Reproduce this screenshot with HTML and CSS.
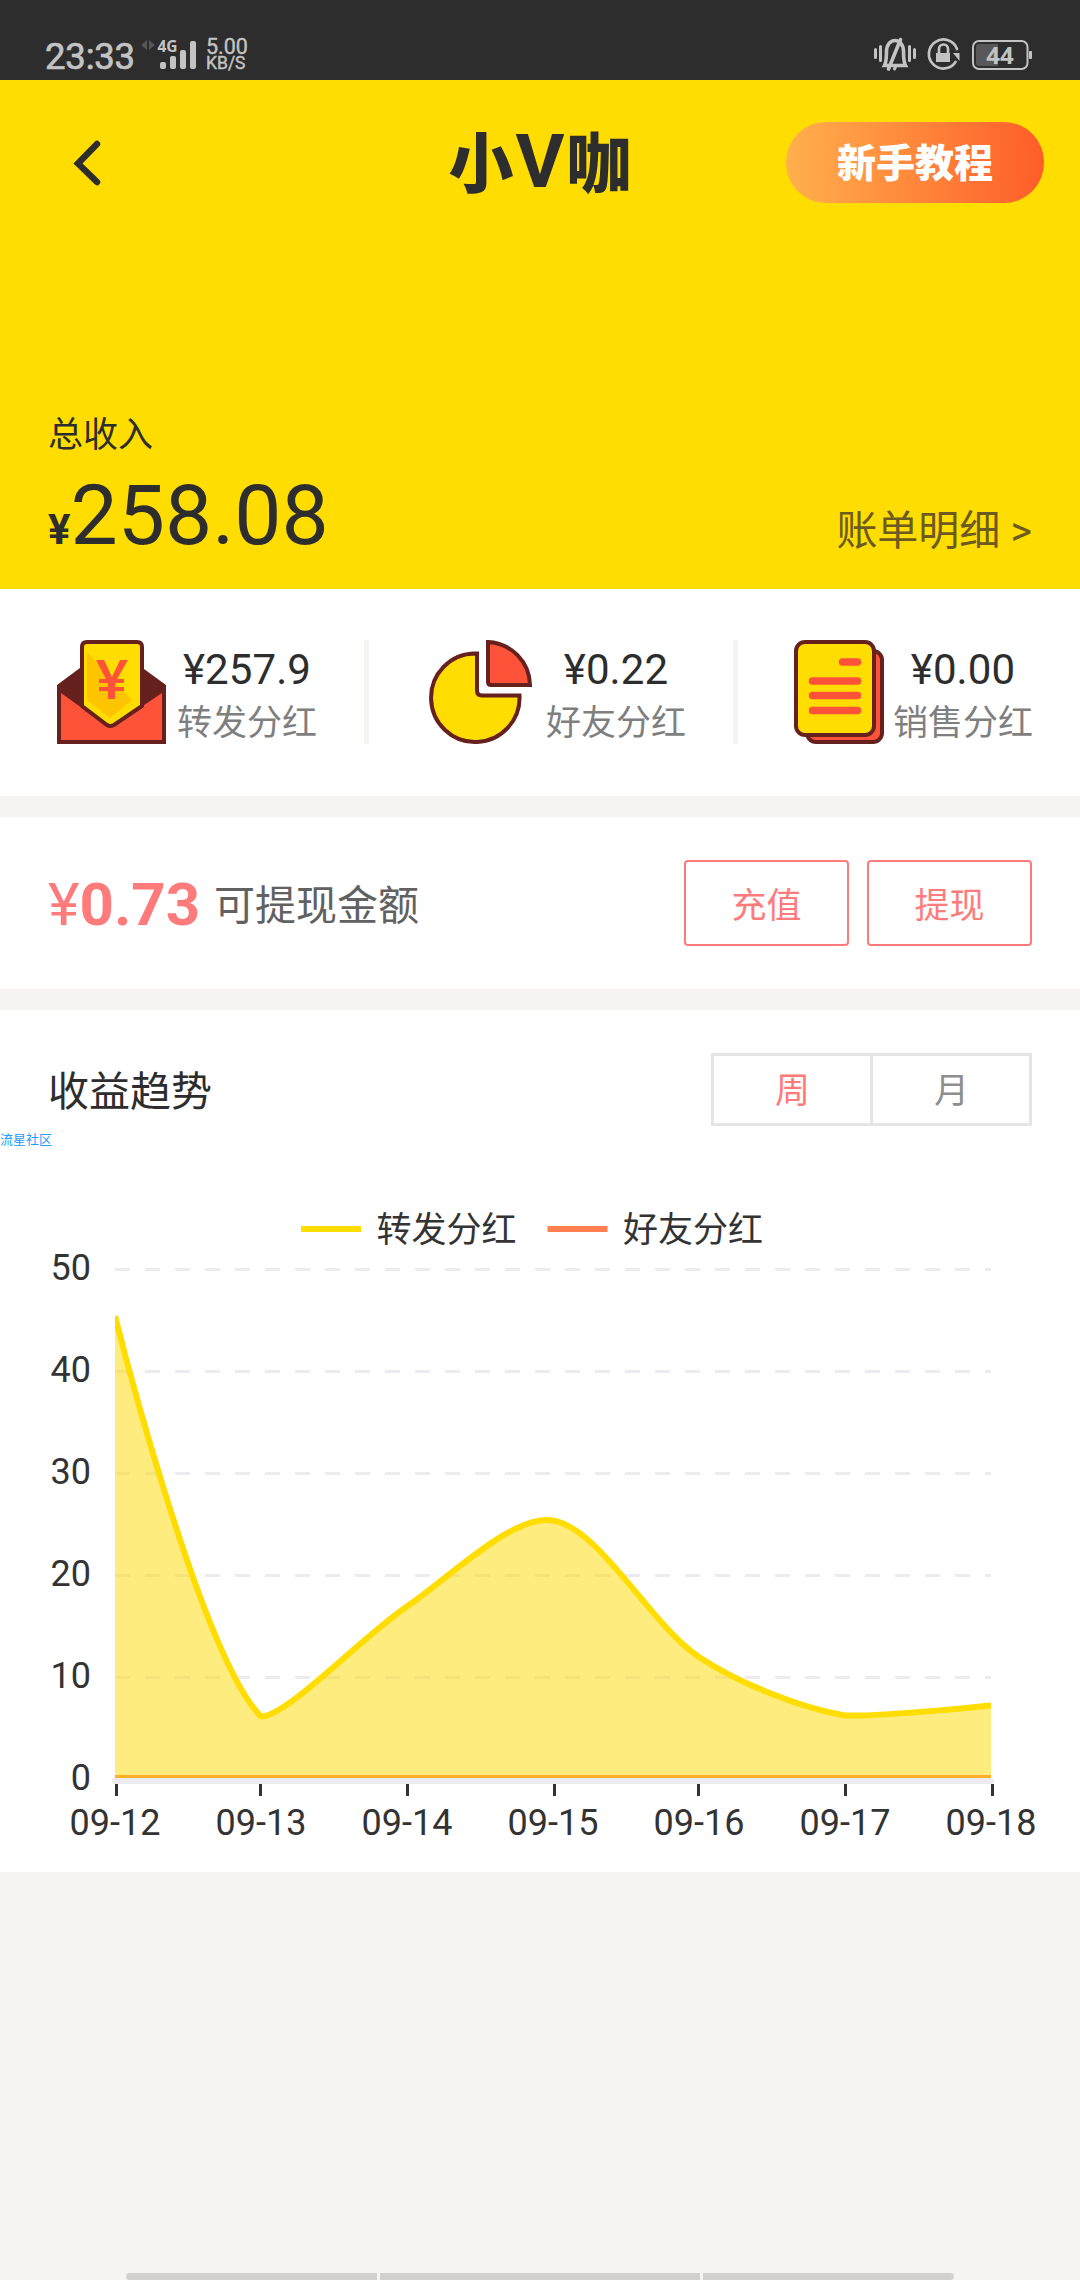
FILE: index.html
```html
<!DOCTYPE html>
<html lang="zh-CN">
<head>
<meta charset="utf-8">
<title>小V咖</title>
<link rel="stylesheet" href="styles.css">
</head>
<body>
<div class="screen">
  <div class="status">
    <span class="clock">23:33</span>
    <svg class="signal" width="56" height="40" viewBox="0 -8 56 40">
      <path d="M6 1v10L0 6zM8 1v10l6-5z" fill="#555"/>
      <text x="16.5" y="13" class="net">4G</text>
      <g fill="#c3c3c3"><rect x="19" y="23" width="6" height="7" rx="2"/><rect x="29" y="17" width="6" height="13" rx="2"/><rect x="39" y="11" width="6" height="19" rx="2"/><rect x="49" y="2" width="6" height="28" rx="2"/></g>
    </svg>
    <span class="speed"><span>5.00</span><span class="unit">KB/S</span></span>
    <svg class="tray" width="160" height="36" viewBox="0 0 160 36">
      <g fill="none" stroke="#c3c3c3" stroke-width="3" stroke-linecap="round">
        <path d="M1.5 13.500v8M6.500 10.500v14M35.500 10.500v14M40.500 13.500v8"/>
        <path d="M10.500 29.500c2-4 2-8 2-14 0-7 4-11 8.500-11s8.500 4 8.500 11c0 6 0 10 2 14z" stroke-width="3.600"/>
        <path d="M26.500 3.500L14.500 33" stroke-width="3.600"/><path d="M20.500 33l1-2" stroke-width="3"/>
        <path d="M83 13a14.500 14.500 0 1 0-1.500 13" stroke-width="2.700"/>
        <path d="M65 18v-5a4.500 4.500 0 0 1 9 0v5" stroke-width="2.700"/>
      </g>
      <path d="M62 17h14v9H62zM79 17h6.500v8z" fill="#c3c3c3"/>
      <rect x="99" y="5" width="54.500" height="28" rx="6" fill="none" stroke="#c3c3c3" stroke-width="2"/>
      <path d="M102 11q0-3 3-3h19v22h-19q-3 0-3-3z" fill="#585858"/>
      <rect x="155" y="15" width="3" height="8" rx="1" fill="#c3c3c3"/>
      <text x="126" y="28" class="level">44</text>
    </svg>
  </div>

  <header class="hero">
    <div class="topbar">
      <svg class="back" width="30" height="48" viewBox="0 0 30 48"><path d="M25 5L6 24.500 25 43" fill="none" stroke="#2d2d2d" stroke-width="6.500" stroke-linecap="round" stroke-linejoin="miter"/></svg>
      <h1 class="brand"><span>小</span><span class="vee">V</span><span>咖</span></h1>
      <button class="guide">新手教程</button>
    </div>
    <div class="income">
      <div>
        <div class="income-label">总收入</div>
        <div class="total"><b>¥</b>258.08</div>
      </div>
      <a class="bill">账单明细 &gt;</a>
    </div>
  </header>

  <section class="stats">
    <div class="stat first">
      <svg width="109" height="104" viewBox="0 0 109 104">
        <path d="M0 45L54 5l55 40v59H0z" fill="#66211e"/>
        <path d="M4 53l49 35 52-35v47H4z" fill="#ff5339"/>
        <path d="M25 7q0-5 5-5h50q5 0 5 5v59L57 85q-4 2-7 0L25 66z" fill="#fd0" stroke="#66211e" stroke-width="4"/>
        <path d="M30 12L75 60 53 78 30 60z" fill="#ffc400"/>
        <path d="M39 20h8l8 17 8-17h8L60 39h7v4h-9v4h9v4h-9v8h-7v-8h-9v-4h9v-4h-9v-4h7z" fill="#ff5339"/>
      </svg>
      <div class="stat-text"><span class="num">¥257.9</span><span class="cap">转发分红</span></div>
    </div>
    <i class="rule"></i>
    <div class="stat second">
      <svg width="104" height="104" viewBox="0 0 104 104">
        <path d="M49 13.500H47a44.250 44.250 0 1 0 44.500 42H54q-5 0-5-5z" fill="#fd0" stroke="#66211e" stroke-width="4"/>
        <path d="M60 2v40q0 3 3 3h39A44 44 0 0 0 60 2z" fill="#ff5339" stroke="#66211e" stroke-width="4"/>
      </svg>
      <div class="stat-text"><span class="num">¥0.22</span><span class="cap">好友分红</span></div>
    </div>
    <i class="rule"></i>
    <div class="stat third">
      <svg width="90" height="104" viewBox="0 0 90 104">
        <rect x="13" y="11" width="75" height="91" rx="9" fill="#ff5339" stroke="#66211e" stroke-width="4"/>
        <rect x="2" y="2" width="78" height="93" rx="9" fill="#fd0" stroke="#66211e" stroke-width="4"/>
        <path d="M48.500 22h15M18.500 41h45M18.500 55.500h45M18.500 70.500h45" stroke="#ff5339" stroke-width="7.500" stroke-linecap="round"/>
      </svg>
      <div class="stat-text"><span class="num">¥0.00</span><span class="cap">销售分红</span></div>
    </div>
  </section>

  <section class="cash">
    <div class="amount"><span>¥</span>0.73</div>
    <div class="cash-label">可提现金额</div>
    <div class="actions"><button>充值</button><button>提现</button></div>
  </section>

  <section class="trend">
    <div class="trend-head">
      <h2>收益趋势</h2>
      <div class="tabs"><span class="on">周</span><span>月</span></div>
    </div>
    <div class="mark">流星社区</div>
    <svg class="chart" width="1080" height="700" viewBox="0 1160 1080 700">
      <defs><clipPath id="plot"><rect x="115" y="1250" width="876" height="528"/></clipPath></defs>
      <rect x="301" y="1226" width="60" height="6" fill="#fd0"/>
      <text x="376.500" y="1241.500" class="legend">转发分红</text>
      <rect x="547.500" y="1226" width="60" height="6" fill="#ff7f50"/>
      <text x="623" y="1241.500" class="legend">好友分红</text>
      <path d="M115 1269.500h876M115 1371.500h876M115 1473.500h876M115 1575.500h876M115 1677.500h876" stroke="#ebebf0" stroke-width="3" stroke-dasharray="15"/>
      <path d="M115 1781h876" stroke="#ebebf0" stroke-width="6" stroke-linecap="round"/>
      <g clip-path="url(#plot)">
        <path d="M115 1316C115 1316 200 1655.600 261 1716.500C287.300 1716.500 361.500 1637 407 1606.500C449.100 1578.200 512.800 1513.500 553 1520.500C600.400 1528.700 650 1624.200 699 1657C737.500 1682.700 799.600 1707.900 845 1715.500C887.200 1716.500 991 1705.500 991 1705.500V1778H115z" fill="#ffda00" fill-opacity=".5"/>
        <path d="M115 1316C115 1316 200 1655.600 261 1716.500C287.300 1716.500 361.500 1637 407 1606.500C449.100 1578.200 512.800 1513.500 553 1520.500C600.400 1528.700 650 1624.200 699 1657C737.500 1682.700 799.600 1707.900 845 1715.500C887.200 1716.500 991 1705.500 991 1705.500" fill="none" stroke="#fd0" stroke-width="6" stroke-linejoin="bevel"/>
        <path d="M115 1776.500h876" stroke="#ffb028" stroke-width="3"/>
      </g>
      <path d="M116.500 1784v12M260.500 1784v12M407.500 1784v12M554.500 1784v12M698.500 1784v12M845.500 1784v12M992.500 1784v12" stroke="#333" stroke-width="3"/>
      <g class="ylab"><text x="91" y="1280">50</text><text x="91" y="1382">40</text><text x="91" y="1484">30</text><text x="91" y="1586">20</text><text x="91" y="1688">10</text><text x="91" y="1790">0</text></g>
      <g class="xlab"><text x="115" y="1835">09-12</text><text x="261" y="1835">09-13</text><text x="407" y="1835">09-14</text><text x="553" y="1835">09-15</text><text x="699" y="1835">09-16</text><text x="845" y="1835">09-17</text><text x="991" y="1835">09-18</text></g>
    </svg>
  </section>

  <div class="navhint"><i></i><i class="mid"></i><i></i></div>
</div>
</body>
</html>
```
FILE: styles.css
```css
* { box-sizing: border-box; }
body { margin: 0; font-family: Roboto, "Noto Sans CJK SC", sans-serif; color: #2d2d2d; background: #f5f4f0; }
button { margin: 0; padding: 0; font-family: inherit; background: none; }
svg { display: block; flex: none; }
.screen { width: 1080px; height: 2280px; display: flex; flex-direction: column; overflow: hidden; }

.status { height: 80px; flex: none; background: #2d2d2d; color: #c3c3c3; display: flex; align-items: flex-start; padding: 36px 0 0 45px; }
.clock { font-size: 36.500px; line-height: 42px; width: 96px; letter-spacing: -.2px; -webkit-text-stroke: .7px #c3c3c3; }
.signal { margin-top: -5px; }
.net { font: 700 15.500px "Open Sans", sans-serif; fill: #c3c3c3; }
.speed { display: flex; flex-direction: column; margin-left: 9px; font-size: 21.500px; line-height: 17px; padding-top: 2px; -webkit-text-stroke: .4px #c3c3c3; }
.unit { font-size: 17.500px; line-height: 16px; }
.tray { margin-left: auto; margin-right: 46px; }
.level { font: 700 24px "Open Sans", sans-serif; fill: #c3c3c3; text-anchor: middle; }

.hero { height: 509px; flex: none; background: #fd0; padding: 42px 48px 10px; display: flex; flex-direction: column; justify-content: space-between; }
.topbar { height: 81px; display: grid; grid-template-columns: 1fr auto 1fr; align-items: center; margin-right: -12px; margin-left: -12px; }
.back { margin-left: 36px; }
.brand { margin: 0; display: flex; gap: 2px; font-family: "Noto Sans CJK SC", sans-serif; font-weight: 900; font-size: 65px; line-height: 74px; height: 81px; }
.vee { font-family: Roboto, sans-serif; font-weight: 700; font-size: 75px; line-height: 79px; }
.guide { justify-self: end; width: 258px; height: 81px; border: 0; border-radius: 40px; background: linear-gradient(90deg, #ffb04c, #ff5d29); color: #fff; font-family: "Noto Sans CJK SC", sans-serif; font-size: 39px; font-weight: 900; padding-bottom: 5px; }
.income { display: flex; justify-content: space-between; align-items: flex-end; }
.income-label { font-size: 35px; line-height: 50px; margin-bottom: 6px; }
.total { font-size: 84px; line-height: 98px; white-space: nowrap; }
.total b { font-size: 42px; }
.bill { font-size: 41px; line-height: 48px; color: #6c5a20; margin-bottom: 24px; }

.stats { height: 207px; flex: none; background: #fff; display: flex; align-items: flex-start; padding: 51px 47px 0 57px; }
.stat { display: flex; align-items: flex-start; justify-content: space-between; }
.first { width: 260px; margin-right: 47px; }
.second { width: 258px; margin: 0 47px 0 59px; }
.third { width: 239px; margin-left: 56px; }
.rule { width: 5px; height: 104px; background: #f5f4f0; }
.stat-text { display: flex; flex-direction: column; align-items: center; padding-top: 3px; }
.num { font-size: 42px; line-height: 54px; letter-spacing: .1px; }
.cap { font-size: 35px; line-height: 54px; color: #7f7f7f; }

.cash { height: 172px; flex: none; margin-top: 21px; background: #fff; display: flex; align-items: center; padding: 0 48px; }
.amount { font-size: 60px; font-weight: 700; color: #ff7b7b; width: 166px; padding-top: 3px; }
.amount span { font-weight: 400; }
.cash-label { font-size: 41px; color: #616161; padding-bottom: 3px; }
.actions { margin-left: auto; display: flex; gap: 18px; }
.actions button { width: 165px; height: 86px; border: 2px solid #ff7b7b; border-radius: 4px; color: #ff7b7b; font-size: 35px; padding-bottom: 2px; }

.trend { height: 862px; flex: none; margin-top: 21px; background: #fff; display: flex; flex-direction: column; }
.trend-head { height: 119px; padding: 43px 48px 0; display: flex; justify-content: space-between; }
.trend-head h2 { margin: 0; font-size: 41px; font-weight: 400; line-height: 78px; }
.tabs { width: 321px; height: 73px; border: 3px solid #e5e5e5; display: flex; color: #8e8e8e; font-size: 35px; line-height: 71px; text-align: center; }
.tabs span { flex: 1; padding-left: 1px; }
.tabs .on { color: #ff7b7b; border-right: 3px solid #e5e5e5; }
.mark { height: 31px; font-size: 13px; line-height: 22px; color: #1e9bff; }
.chart text { font-size: 36px; fill: #333; }
.chart .legend { font-size: 35px; }
.ylab { text-anchor: end; }
.xlab { text-anchor: middle; }

.navhint { margin: auto 126px 0; height: 7px; display: flex; gap: 3px; }
.navhint i { flex: 251; background: #d2d1cd; }
.navhint .mid { flex: 320; }
.navhint i:first-child { border-radius: 4px 0 0 4px; }
.navhint i:last-child { border-radius: 0 4px 4px 0; }
```
